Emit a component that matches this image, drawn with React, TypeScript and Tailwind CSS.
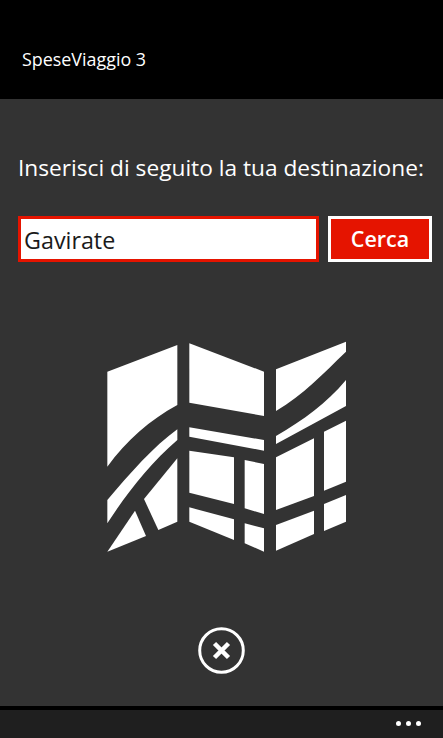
export default function App() {
  const polys = [
    "M52 125L262 45V225C180 270 110 330 52 410Z",
    "M52 510C120 430 190 350 262 298V330C180 400 110 490 52 580Z",
    "M262 385V575L205 600L162 507Z",
    "M52 665L135 542L168 618Z",
    "M298 40L522 125V258L298 218Z",
    "M298 292L522 330V362L298 320Z",
    "M298 362L432 382V522L298 488Z",
    "M464 390L522 402V552L464 535Z",
    "M298 532L432 568V630L298 575Z",
    "M464 580L522 595V665L464 640Z",
    "M558 118L768 35V65C700 130 640 195 558 243Z",
    "M558 318C640 270 710 220 768 150V228L558 342Z",
    "M558 382L672 325V498L558 540Z",
    "M702 305L768 272V455L702 482Z",
    "M558 585L672 542V612L558 662Z",
    "M702 522L768 495V575L702 603Z",
  ];
  return (
    <div className="flex h-[738px] w-[443px] flex-col overflow-hidden bg-[#333333] font-['Open_Sans','Noto_Sans',sans-serif] text-white">
      <header className="flex h-[99px] items-start bg-black pl-[22px] pt-[47px]">
        <span className="text-[17.9px] leading-6">SpeseViaggio 3</span>
      </header>
      <main className="flex flex-1 flex-col">
        <p className="mt-[53px] pl-[18px] text-[22.7px] leading-8 whitespace-nowrap">Inserisci di seguito la tua destinazione:</p>
        <div className="mt-[32px] flex gap-[9px] pl-[18px]">
          <div className="flex h-[46px] w-[301px] items-center border-[3px] border-[#e51400] bg-white pl-[3px] pt-[3px] text-[23.3px] text-[#1a1a1a]">Gavirate</div>
          <button className="h-[46px] w-[104px] border-[3px] border-white bg-[#e51400] text-[21.5px] font-semibold text-white">Cerca</button>
        </div>
        <svg className="mt-[68px] ml-[90px] h-[230px] w-[270px]" viewBox="0 0 810 690" fill="#fff">
          {polys.map((d) => (
            <path key={d} d={d} />
          ))}
        </svg>
        <div className="mt-[67px] flex justify-center pr-[1px]">
          <svg className="h-[47px] w-[47px]" viewBox="0 0 47 47" fill="none" stroke="#fff">
            <circle cx="23.5" cy="23.5" r="21.8" strokeWidth="3" />
            <path d="M16.5 16.5L30.5 30.5M30.5 16.5L16.5 30.5" strokeWidth="4.5" />
          </svg>
        </div>
      </main>
      <div className="h-[4px] bg-black" />
      <footer className="flex h-[28px] items-center justify-end gap-[5px] bg-[#1f1f1f] pr-[22px] pb-[1px]">
        <span className="h-[5px] w-[5px] rounded-full bg-white" />
        <span className="h-[5px] w-[5px] rounded-full bg-white" />
        <span className="h-[5px] w-[5px] rounded-full bg-white" />
      </footer>
    </div>
  );
}
